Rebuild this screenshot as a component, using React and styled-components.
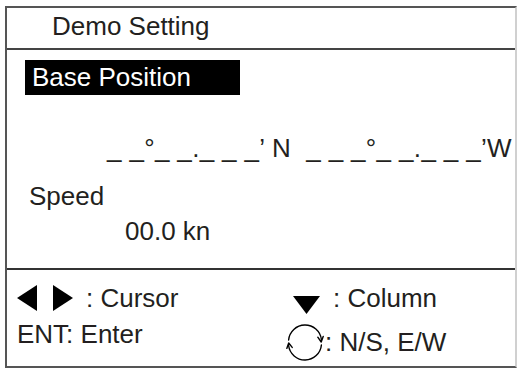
import React from "react";
import styled, { createGlobalStyle } from "styled-components";

const Global = createGlobalStyle`
  html, body { margin: 0; padding: 0; background: #fff; overflow: hidden; }
  body { font-family: "Liberation Sans", Arial, Helvetica, sans-serif; color: #231f20; }
`;

const Panel = styled.div`
  box-sizing: border-box;
  margin: 6px 0 0 5px;
  width: 512px;
  height: 362px;
  border: 2px solid #555;
  border-right-color: #d0d0d0;
  box-shadow: 10px 8px 0 #000;
  display: flex;
  flex-direction: column;
  font-size: 26px;
  line-height: 30px;
`;

const TitleBar = styled.div`
  box-sizing: border-box;
  height: 42px;
  padding: 3px 0 0 45px;
  border-bottom: 2px solid #444;
`;

const Body = styled.div`
  height: 218px;
  display: flex;
  flex-direction: column;
  align-items: flex-start;
`;

const Highlight = styled.div`
  box-sizing: border-box;
  margin: 10px 0 0 18px;
  width: 215px;
  height: 35px;
  line-height: 35px;
  padding-left: 7px;
  background: #000;
  color: #fff;
`;

const Line = styled.div`
  margin-top: ${(p) => p.$top}px;
  margin-left: ${(p) => p.$indent}px;
  letter-spacing: ${(p) => p.$track || 0}px;
  white-space: pre;
`;

const Footer = styled.div`
  flex: 1;
  border-top: 2px solid #333;
  display: grid;
  grid-template-columns: 269px 1fr;
  padding: 13px 0 0 10px;
`;

const Column = styled.div`
  display: flex;
  flex-direction: column;
  gap: ${(p) => p.$gap}px;
`;

const KeyRow = styled.div`
  display: flex;
  align-items: ${(p) => (p.$top ? "flex-start" : "center")};
  gap: ${(p) => p.$gap || 0}px;
  padding-left: ${(p) => p.$indent || 0}px;
  min-height: 30px;
`;

const Glyph = styled.svg`
  display: block;
  flex: none;
  margin-top: ${(p) => p.$drop || 0}px;
`;

const Arrows = () => (
  <Glyph width="56" height="26" viewBox="0 0 56 26">
    <polygon points="0,13 20,0 20,26" fill="#000" />
    <polygon points="36,0 56,13 36,26" fill="#000" />
  </Glyph>
);

const Down = () => (
  <Glyph width="27" height="18" viewBox="0 0 27 18" $drop={13}>
    <polygon points="0,0 27,0 13.5,18" fill="#000" />
  </Glyph>
);

const Rotate = () => (
  <Glyph width="38" height="40" viewBox="0 0 38 40">
    <g fill="none" stroke="#000" strokeWidth="1.4" strokeLinecap="round" strokeLinejoin="round">
      <path d="M2.6 18 A16.5 16.5 0 0 1 35.4 17.5" />
      <path d="M31.8 15.2 L35.2 20 L37.2 14.4" />
      <path d="M35.4 23 A16.5 16.5 0 0 1 2.6 23.5" />
      <path d="M0.8 26.4 L2.7 21 L6.2 25.4" />
    </g>
  </Glyph>
);

export default function App() {
  return (
    <>
      <Global />
      <Panel>
        <TitleBar>Demo Setting</TitleBar>
        <Body>
          <Highlight>Base Position</Highlight>
          <Line $top={38} $indent={100} $track={0.35}>
            {"_ _°_ _._ _ _’ N  _ _ _°_ _._ _ _’W"}
          </Line>
          <Line $top={18} $indent={22}>Speed</Line>
          <Line $top={5} $indent={118}>00.0 kn</Line>
        </Body>
        <Footer>
          <Column $gap={6}>
            <KeyRow $gap={13}>
              <Arrows />
              <span>: Cursor</span>
            </KeyRow>
            <KeyRow>ENT: Enter</KeyRow>
          </Column>
          <Column $gap={8}>
            <KeyRow $top $gap={13} $indent={7}>
              <Down />
              <span>: Column</span>
            </KeyRow>
            <KeyRow $gap={1}>
              <Rotate />
              <span>: N/S, E/W</span>
            </KeyRow>
          </Column>
        </Footer>
      </Panel>
    </>
  );
}
